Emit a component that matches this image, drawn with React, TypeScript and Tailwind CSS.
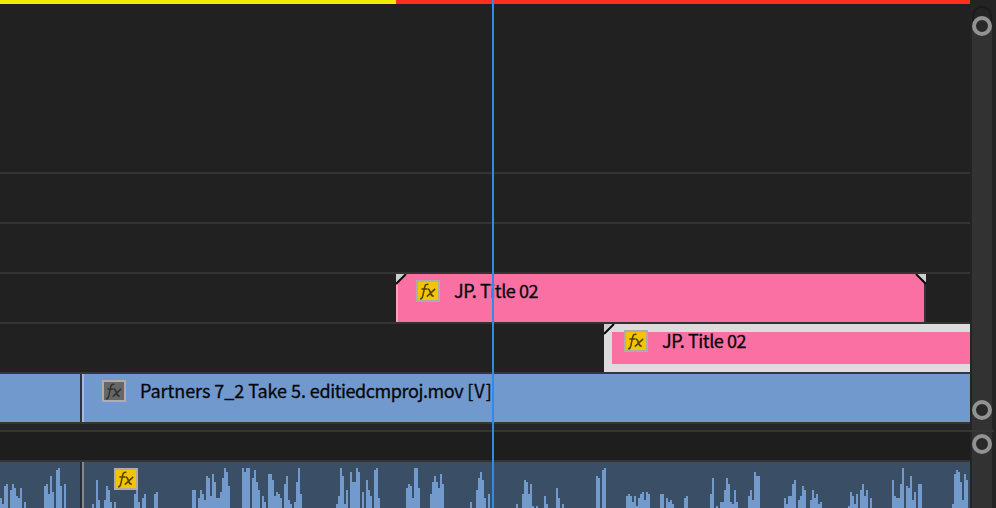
import React from "react";

// Waveform bars as "x:top" pairs, x in timeline pixels and top in pixels below the clip's upper edge.
const WAVE: number[][] = [
  [0,36],[2,42],[4,24],[6,22],[10,28],[12,22],[14,26],[16,34],[18,36],[20,26],[24,40],
  [44,24],[46,22],[48,32],[50,14],[52,30],[56,8],[58,6],[60,24],[64,22],
  [92,42],[96,18],[98,38],[104,38],[106,24],[108,28],[110,40],[114,40],
  [134,32],[136,28],[138,40],[142,36],[144,32],[154,32],[156,30],
  [192,28],[194,28],[198,36],[200,28],[202,32],[204,38],[206,14],[208,16],[210,34],[212,12],[214,20],[216,36],[218,36],[220,30],[222,16],[224,6],[226,10],[228,24],
  [242,6],[244,10],[246,6],[248,6],[252,16],[254,8],[256,20],[258,28],[262,34],[264,40],[268,12],[270,12],[272,18],[274,34],[276,30],[278,32],[280,36],[284,22],[286,14],[288,38],[290,42],[294,40],[296,20],[298,6],[300,32],
  [336,42],[338,34],[340,6],[342,14],[344,42],[346,28],[350,10],[352,20],[354,20],[356,6],[358,10],[362,30],[366,18],[368,28],[370,34],[374,8],[376,6],[378,36],
  [406,26],[408,22],[410,24],[412,36],[414,6],[416,6],[418,26],[430,32],[432,20],[434,14],[436,20],[438,26],[440,12],[442,22],
  [470,40],[476,28],[478,16],[480,10],[482,18],[484,36],[488,32],
  [516,42],[522,32],[524,18],[526,20],[528,32],[530,22],[532,44],[536,44],[544,34],[546,42],[556,26],[558,36],[562,42],
  [596,14],[598,16],[602,8],[604,6],
  [626,34],[628,32],[630,34],[632,40],[634,34],[636,44],[638,36],[640,32],[642,30],[644,38],[646,30],[648,32],[660,32],[662,32],[666,36],[668,40],[670,38],[672,42],[684,36],[686,34],
  [710,32],[712,16],[716,44],[720,40],[722,40],[724,28],[726,16],[728,22],[730,40],[732,42],[734,28],[736,40],
  [748,34],[750,28],[752,38],[754,10],[756,14],[758,14],
  [784,36],[786,42],[788,34],[790,34],[792,22],[794,18],[798,38],[800,34],[802,24],[804,28],[810,38],[812,28],[814,36],[816,32],[818,42],[820,40],
  [848,44],[850,30],[852,34],[854,42],[856,32],[860,28],[862,22],[864,34],[866,28],[870,36],
  [892,18],[894,34],[896,36],[898,36],[900,22],[902,6],[906,24],[908,26],[910,14],[912,38],[914,30],[918,22],[920,22],
  [952,42],[954,12],[956,8],[958,10],[960,20],[962,38],[964,12],[966,18],
];

function FxBadge({ muted = false }: { muted?: boolean }) {
  return (
    <div
      className={`flex h-[22px] w-6 shrink-0 border-2 border-[#b1aca9] ${muted ? "bg-[#666766] text-[#303331]" : "bg-[#f4c400] text-[#514000]"}`}
    >
      <svg width="20" height="18" viewBox="0 0 20 18" fill="none" stroke="currentColor" strokeWidth="1.5">
        <path d="M2 16.8C4 17 4.4 15.8 4.8 13.8L6.7 5C7.2 2.7 8.4 1.9 10.4 2.4M3.4 7.1H9.3" />
        <path d="M9.6 7.1C11.3 6.9 11.6 8 12.2 10.2C12.9 12.8 13.4 14.6 15.8 14M17.2 6.9L8.8 14.6" />
      </svg>
    </div>
  );
}

function Label({ children, className }: { children: React.ReactNode; className: string }) {
  return (
    <span
      className={`-mt-[3px] ml-[14px] whitespace-nowrap font-['Noto_Sans_CJK_SC','Noto_Sans',sans-serif] text-[18px] leading-[26px] font-normal text-[#05070b] [-webkit-text-stroke:0.3px_#05070b] ${className}`}
    >
      {children}
    </span>
  );
}

function CornerMark({ flip = false }: { flip?: boolean }) {
  return (
    <svg className={`absolute top-0 ${flip ? "right-0 -scale-x-100" : "left-0"}`} width="11" height="11">
      <path d="M0 0H10L0 10Z" fill="#d0cdce" />
      <path d="M0 10L10 0" stroke="#08080a" strokeWidth="2" />
    </svg>
  );
}

function Handle() {
  return <div className="size-5 shrink-0 rounded-full border-4 border-[#929292] bg-[#292929]" />;
}

const track = "h-[50px] border-t-2 border-[#333333]";

export default function App() {
  return (
    <div className="relative flex h-[508px] w-[996px] overflow-hidden bg-[#212121]">
      <main className="w-[970px] shrink-0">
        <div className="flex h-1">
          <div className="w-[396px] bg-[#f0ee00]" />
          <div className="flex-1 bg-[#ff2f1e]" />
        </div>
        <div className="h-[168px]" />
        <div className={track} />
        <div className={track} />
        <div className={`${track} pl-[396px]`}>
          <div className="relative h-12 w-[530px] border-r-2 border-[#353334] bg-[#fa70a3]">
            <div className="flex h-full border-l-2 border-[#fba0bf] pt-1.5 pl-[18px]">
              <FxBadge />
              <Label className="tracking-[-0.45px]">JP. Title 02</Label>
            </div>
            <CornerMark />
            <div className="absolute top-0 -right-0.5 h-[11px] w-[11px]"><CornerMark flip /></div>
          </div>
        </div>
        <div className={`${track} pl-[604px]`}>
          <div className="relative h-12 border-y-8 border-l-8 border-[#dddcdc] bg-[#fa70a3]">
            <div className="-mt-0.5 flex pl-3">
              <FxBadge />
              <Label className="tracking-[-0.45px]">JP. Title 02</Label>
            </div>
            <div className="absolute -top-2 -left-2 h-[11px] w-[11px]"><CornerMark /></div>
          </div>
        </div>
        <div className="flex h-[52px] border-y-2 border-[#353739]">
          <div className="w-20 bg-[#7199cd]" />
          <div className="w-0.5 bg-[#2c353e]" />
          <div className="flex flex-1 border-l-2 border-[#a4bbdd] bg-[#7199cd] pt-1.5 pl-[18px]">
            <FxBadge muted />
            <Label className="tracking-[-0.05px]">
              Partners 7_2 Take 5. <span className="tracking-[-0.42px]">editiedcmproj.mov</span>{" "}
              <span className="tracking-[1.1px]">[V]</span>
            </Label>
          </div>
        </div>
        <div className="h-1.5 bg-[#252525]" />
        <div className="h-0.5 bg-[#353535]" />
        <div className="h-7 bg-[#1e1e1e]" />
        <div className="relative h-12 border-t-2 border-[#343535] bg-[#3a4e66]">
          <svg className="block" width="970" height="46" shapeRendering="crispEdges">
            <rect x="80" width="2" height="46" fill="#252e38" />
            <rect x="82" width="2" height="46" fill="#85898d" />
            {WAVE.map(([x, y]) => (
              <rect key={x} x={x} y={y} width="2" height={46 - y} fill="#739acd" />
            ))}
          </svg>
          <div className="absolute top-1.5 left-[114px]"><FxBadge /></div>
        </div>
      </main>
      <aside className="flex flex-1 flex-col bg-[#242424]">
        <div className="mt-1.5 ml-0.5 h-5 w-5 rounded-t-full border-2 border-b-0 border-[#1b1b1b]" />
        <div className="ml-0.5 flex h-[404px] w-5 flex-col items-center justify-between bg-[#323232] pb-[10px]">
          <div className="-mt-2.5"><Handle /></div>
          <Handle />
        </div>
        <div className="h-0.5 w-6 bg-[#373737]" />
        <div className="ml-0.5 w-5 flex-1 bg-[#323232] pt-0.5">
          <Handle />
        </div>
      </aside>
      <div className="absolute top-0 left-[492px] h-full w-0.5 bg-[#2f8bea]" />
    </div>
  );
}
